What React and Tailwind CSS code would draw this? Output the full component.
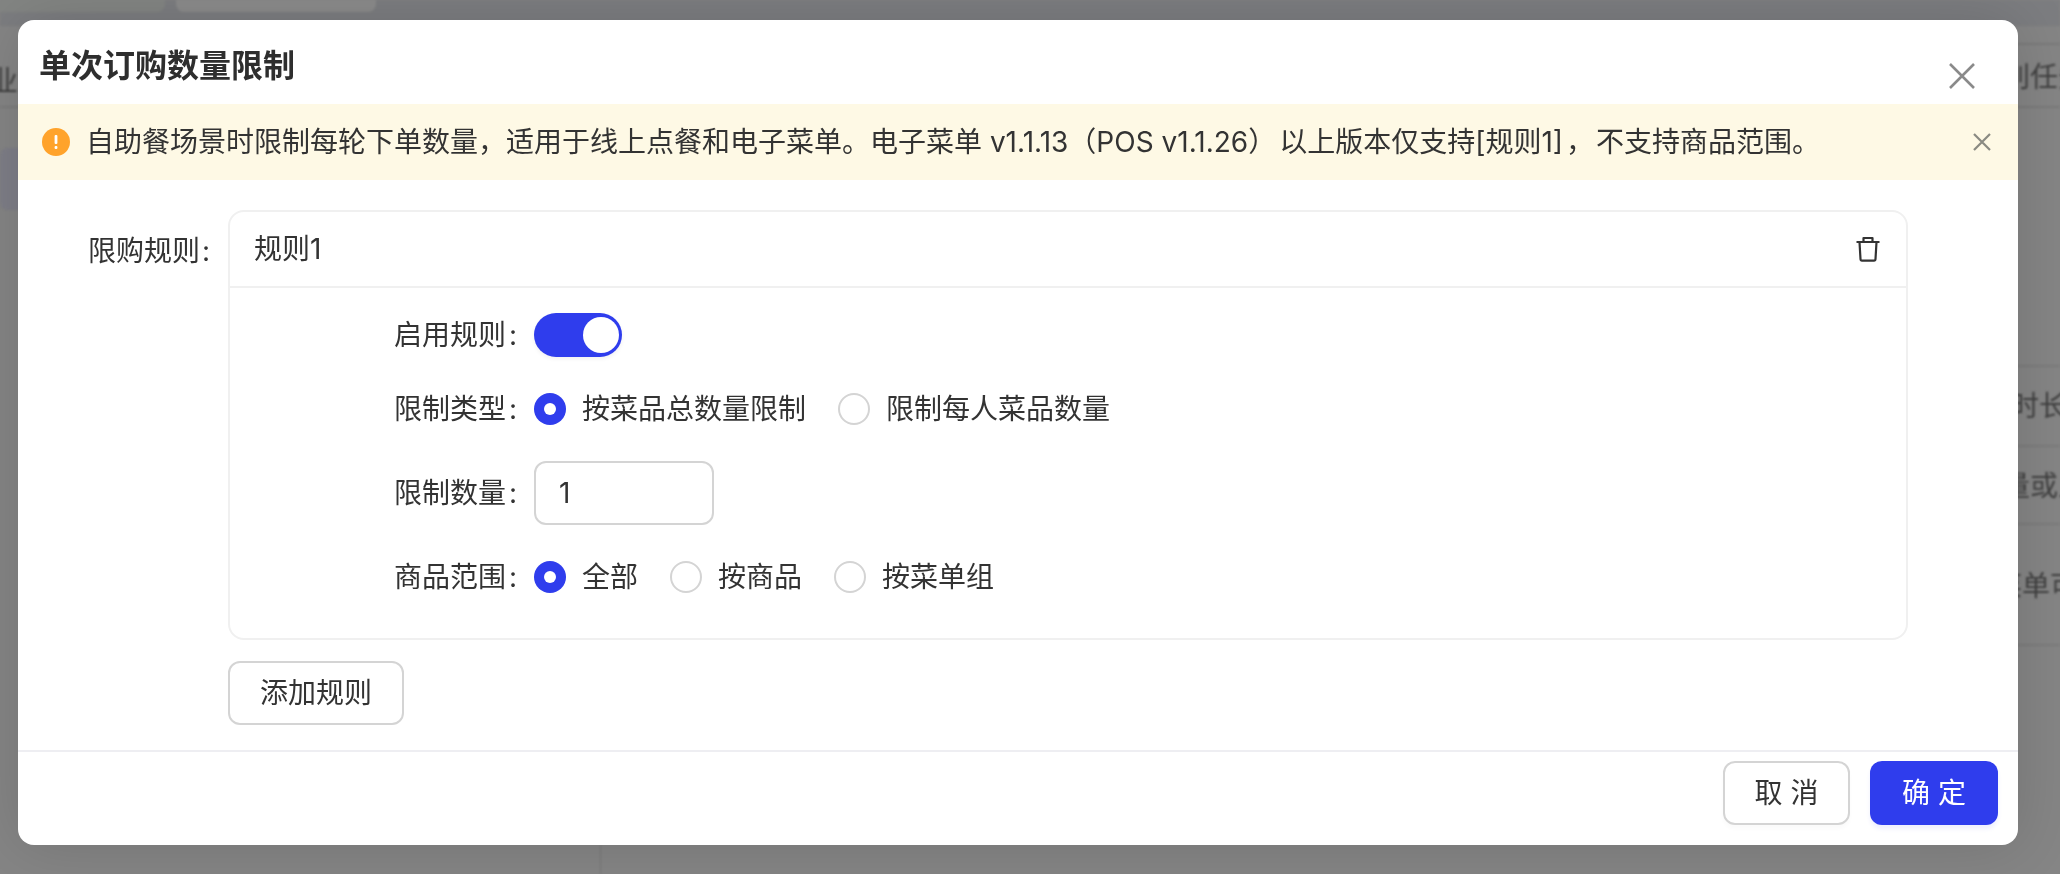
import React from "react";

function Radio({ checked }) {
  return checked ? (
    <span className="w-8 h-8 rounded-full bg-[#2f3ded] flex items-center justify-center shrink-0">
      <span className="w-3 h-3 rounded-full bg-white" />
    </span>
  ) : (
    <span className="w-8 h-8 rounded-full border-2 border-[#d4d4d4] bg-white shrink-0" />
  );
}

function Option({ checked, label, className }) {
  return (
    <span className={"flex items-center gap-[16px] " + (className || "")}>
      <Radio checked={checked} />
      <span>{label}</span>
    </span>
  );
}

function Row({ label, className, children }) {
  return (
    <div className={"flex items-center " + (className || "")}>
      <span className="w-[123px] ml-[164px] mr-[17px] flex justify-between shrink-0 whitespace-nowrap">
        <span>{label}</span>
        <span>:</span>
      </span>
      {children}
    </div>
  );
}

export default function App() {
  return (
    <div className="relative w-[2060px] h-[874px] overflow-hidden bg-[#858585] text-[28px] text-[#333333] [text-spacing-trim:space-all] font-['Inter','Noto_Sans_CJK_SC',sans-serif]">
      {/* dimmed page behind the dialog */}
      <div className="absolute inset-0 blur-[1px] text-[#3f3f3f]">
        <div className="absolute left-0 top-0 w-[165px] h-[12px] bg-[#838583] rounded-br-lg" />
        <div className="absolute left-[176px] top-0 w-[200px] h-[12px] bg-[#8b8b8b] rounded-b-lg" />
        <div className="absolute left-0 top-[0px] w-full h-[26px] bg-[#7c7d80] -z-10" />
        <span className="absolute left-[-10px] top-[60px]">业</span>
        <div className="absolute left-0 top-[106px] w-[20px] h-[2px] bg-[#7b7b7b]" />
        <div className="absolute left-0 top-[148px] w-[20px] h-[62px] rounded-l-lg bg-[#7e7e87]" />
        <div className="absolute right-0 top-[43px] w-[50px] h-[2px] bg-[#7a7a7a]" />
        <div className="absolute right-0 top-[106px] w-[50px] h-[2px] bg-[#7a7a7a]" />
        <span className="absolute left-[2002px] top-[56px] whitespace-nowrap">别任务</span>
        <div className="absolute right-0 top-[365px] w-[50px] h-[2px] bg-[#7b7b7b]" />
        <span className="absolute left-[2011px] top-[385px] whitespace-nowrap">时长</span>
        <div className="absolute right-0 top-[445px] w-[50px] h-[2px] bg-[#7b7b7b]" />
        <span className="absolute left-[2002px] top-[465px] whitespace-nowrap">量或人</span>
        <div className="absolute right-0 top-[523px] w-[50px] h-[2px] bg-[#7b7b7b]" />
        <span className="absolute left-[1994px] top-[565px] whitespace-nowrap">菜单可</span>
        <div className="absolute right-0 top-[644px] w-[50px] h-[2px] bg-[#7b7b7b]" />
        <div className="absolute left-[600px] top-[845px] w-[1px] h-[29px] bg-[#777777]" />
      </div>

      {/* dialog */}
      <div className="absolute left-[18px] top-[20px] w-[2000px] h-[825px] bg-white rounded-[16px] shadow-[0_0_60px_rgba(0,0,0,0.14)] flex flex-col overflow-hidden">
        <div className="h-[84px] shrink-0 flex items-center justify-between pl-[21px] pr-[43px]">
          <span className="text-[32px] font-semibold leading-none mt-[8px] text-[#2e2e2e]">单次订购数量限制</span>
          <svg width="26" height="26" viewBox="0 0 26 26" className="mt-[28px]" fill="none" stroke="#8a8a8a" strokeWidth="2.6">
            <path d="M1 1 L25 25 M25 1 L1 25" />
          </svg>
        </div>

        <div className="h-[76px] shrink-0 bg-[#fef9e5] flex items-center pl-[24px] pr-[26px]">
          <span className="w-[28px] h-[28px] rounded-full bg-[#ffa32b] flex items-center justify-center shrink-0">
            <svg width="4" height="14" viewBox="0 0 4 14" fill="#fff">
              <rect x="0.6" y="0" width="2.8" height="9" rx="1" />
              <rect x="0.6" y="11" width="2.8" height="3" rx="1" />
            </svg>
          </span>
          <span className="ml-[16px] flex-1 whitespace-nowrap">
            自助餐场景时限制每轮下单数量，适用于线上点餐和电子菜单。电子菜单 v1.1.13（POS v1.1.26）
            <span className="ml-[3px]">以上版本仅支持[规则1]</span>
            <span className="ml-[3px] mr-[2px]">，</span>
            不支持商品范围。
          </span>
          <svg width="20" height="20" viewBox="0 0 20 20" fill="none" stroke="#8a8a82" strokeWidth="2.2">
            <path d="M2 2 L18 18 M18 2 L2 18" />
          </svg>
        </div>

        <div className="flex-1 flex items-start pt-[30px] pl-[70px]">
          <span className="w-[122px] mt-[24px] mr-[18px] flex justify-between shrink-0 whitespace-nowrap leading-[34px]">
            <span>限购规则</span>
            <span>:</span>
          </span>
          <div className="w-[1680px]">
            <div className="h-[430px] border-2 border-[#f0f0f0] rounded-[16px]">
              <div className="h-[76px] border-b-2 border-[#f0f0f0] flex items-center justify-between pl-[24px] pr-[25px]">
                <span>规则1</span>
                <svg width="26" height="26" viewBox="0 0 26 26" fill="none" stroke="#333333" strokeWidth="2.2" strokeLinejoin="round">
                  <path d="M1.5 6 H24.5" />
                  <path d="M8.5 6 V2 H17.5 V6" />
                  <path d="M4.5 6 L5.5 23 Q5.6 24.6 7 24.6 H19 Q20.4 24.6 20.5 23 L21.5 6" />
                </svg>
              </div>
              <div className="pt-[25px]">
                <Row label="启用规则" className="h-[44px]">
                  <span className="w-[88px] h-[44px] rounded-full bg-[#2f3ded] flex items-center justify-end pr-[3px] shadow-[0_2px_4px_rgba(0,0,0,0.06)]">
                    <span className="w-[36px] h-[36px] rounded-full bg-white" />
                  </span>
                </Row>
                <Row label="限制类型" className="h-[32px] mt-[36px]">
                  <Option checked label="按菜品总数量限制" />
                  <Option label="限制每人菜品数量" className="ml-[32px]" />
                </Row>
                <Row label="限制数量" className="h-[64px] mt-[36px]">
                  <span className="w-[180px] h-[64px] border-2 border-[#d4d4d4] rounded-[12px] flex items-center pl-[23px]">1</span>
                </Row>
                <Row label="商品范围" className="h-[32px] mt-[36px]">
                  <Option checked label="全部" />
                  <Option label="按商品" className="ml-[32px]" />
                  <Option label="按菜单组" className="ml-[32px]" />
                </Row>
              </div>
            </div>
            <button className="mt-[21px] w-[176px] h-[64px] border-2 border-[#d4d4d4] rounded-[12px] bg-white flex items-center justify-center">添加规则</button>
          </div>
        </div>

        <div className="h-[95px] shrink-0 border-t-2 border-[#eeeef2] flex items-start justify-end pt-[9px] pr-[20px] gap-[20px]">
          <button className="w-[127px] h-[64px] border-2 border-[#d4d4d4] rounded-[12px] bg-white shadow-[0_4px_4px_rgba(0,0,0,0.02)] flex items-center justify-center">取 消</button>
          <button className="w-[128px] h-[64px] rounded-[12px] bg-[#2f3ded] text-white shadow-[0_4px_4px_rgba(47,61,237,0.08)] flex items-center justify-center">确 定</button>
        </div>
      </div>
    </div>
  );
}
